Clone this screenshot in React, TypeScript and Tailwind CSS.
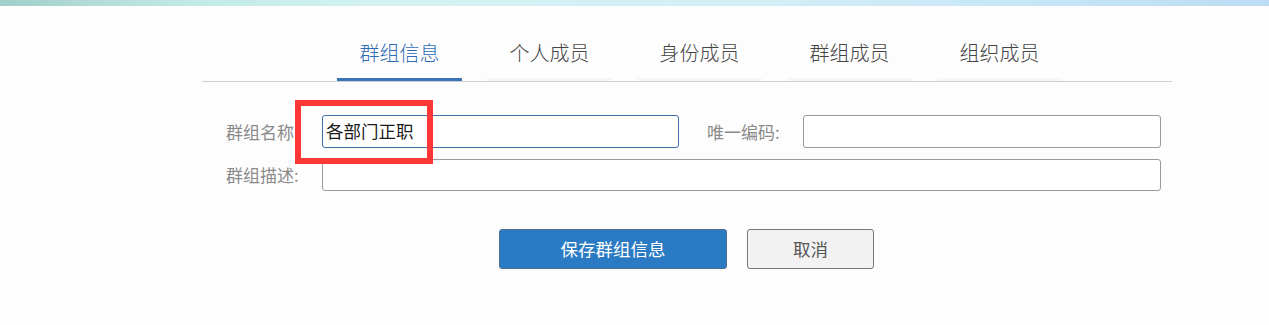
import React from "react";

const tabs = ["群组信息", "个人成员", "身份成员", "群组成员", "组织成员"];

export default function App() {
  return (
    <div
      className="relative min-h-[325px] w-[1269px] bg-[#fdfdfd]"
      style={{ fontFamily: '"Noto Sans CJK SC", "Noto Sans", sans-serif' }}
    >
      <div className="h-[6px] w-full bg-[linear-gradient(to_right,#a1cecb_0%,#c2eae4_15%,#d3f3f2_30%,#d2eff6_60%,#c5e4f6_85%,#bbdcf3_100%)]" />

      <div className="ml-[202px] w-[970px] border-b border-[#cfcfcf] pt-[33px]">
        <div className="flex gap-[25px] pl-[135px]">
          {tabs.map((t, i) => (
            <div
              key={t}
              className={
                i === 0
                  ? "w-[125px] border-b-[3px] border-[#3b73b7] pb-[11px] text-center text-[20px] font-light leading-[28px] text-[#2f6cb5]"
                  : "w-[125px] border-b-[3px] border-[#f6f6f6] pb-[11px] text-center text-[20px] font-light leading-[28px] text-[#444444]"
              }
            >
              {t}
            </div>
          ))}
        </div>
      </div>

      <div className="mt-[33px] flex items-center">
        <div className="ml-[226px] w-[96px] text-[17px] leading-[24px] text-[#8a8a8a]">群组名称:</div>
        <div className="flex h-[33px] w-[357px] items-center rounded-[3px] border border-[#3d6ea5] bg-white pl-[3px] text-[17.5px] text-[#1a1a1a]">
          各部门正职
        </div>
        <div className="ml-[28px] w-[96px] text-[17px] leading-[24px] text-[#8a8a8a]">唯一编码:</div>
        <div className="h-[33px] w-[358px] rounded-[3px] border border-[#9a9a9a] bg-white" />
      </div>

      <div className="mt-[11px] flex items-center">
        <div className="ml-[226px] w-[96px] text-[17px] leading-[24px] text-[#8a8a8a]">群组描述:</div>
        <div className="h-[32px] w-[839px] rounded-[3px] border border-[#9a9a9a] bg-white" />
      </div>

      <div className="mt-[38px] flex gap-[20px] pl-[499px]">
        <button className="h-[40px] w-[228px] rounded-[3px] border border-[#4f6f8f] bg-[#2b7bc4] text-[17.5px] text-white">
          保存群组信息
        </button>
        <button className="h-[40px] w-[127px] rounded-[3px] border border-[#777777] bg-[#f2f2f2] text-[17.5px] text-[#555555]">
          取消
        </button>
      </div>

      <div className="pointer-events-none absolute left-[295px] top-[100px] h-[64px] w-[138px] border-[6px] border-[#fd3636]" />
    </div>
  );
}
